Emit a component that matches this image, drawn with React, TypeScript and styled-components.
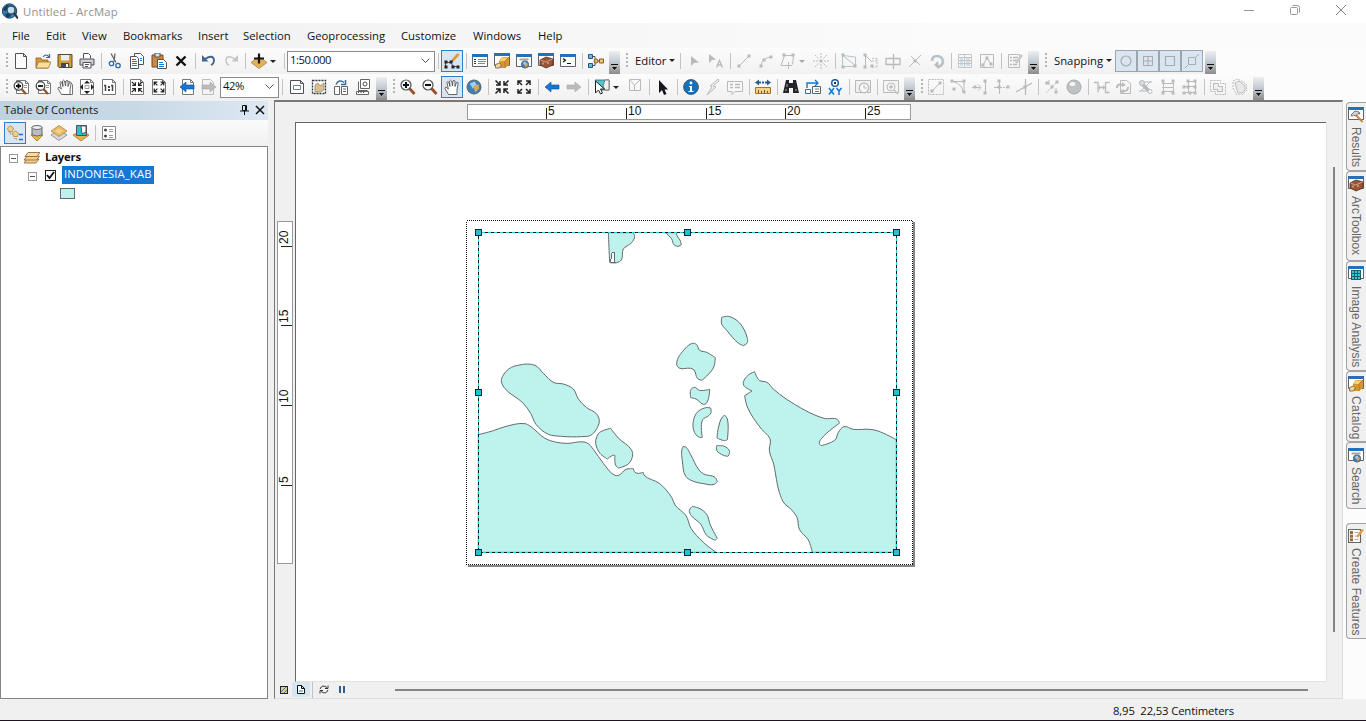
import React from "react";
import styled, { createGlobalStyle } from "styled-components";

const Global = createGlobalStyle`
  * { box-sizing: border-box; }
  body { margin: 0; overflow: hidden; background: #f0f0f0; }
`;

const K = "#50505a";
const G = "#b9bab9";
const B = "#1377d3";
const Y = "#e2b05a";
const BR = "#8a5a2b";

const Shell = styled.div`
  width: 1366px;
  height: 721px;
  display: flex;
  flex-direction: column;
  font-family: "Open Sans", "Noto Sans", sans-serif;
  font-size: 11.3px;
  color: #111;
  background: #f0f0f0;
  border-bottom: 1px solid #1d1420;
`;
const TitleBar = styled.header`
  height: 23px;
  flex: none;
  display: flex;
  align-items: center;
  padding: 0 19px 1px 2px;
  background: #fff;
  color: #929292;
`;
const Title = styled.span`
  flex: 1;
  margin-left: 5px;
  letter-spacing: 0.15px;
  padding-top: 1px;
`;
const WindowButton = styled.span`
  width: 12px;
  height: 16px;
  margin-left: 34px;
  display: flex;
  align-items: center;
  justify-content: center;
  padding-bottom: 2px;
`;
const MenuBar = styled.nav`
  height: 25px;
  flex: none;
  display: flex;
  align-items: center;
  gap: 16px;
  padding-left: 12px;
  background: linear-gradient(90deg, #f0f0f0, #fbfbfb 70%);
`;
const MenuItem = styled.span<{ $w: number }>`
  width: ${(p) => p.$w}px;
  white-space: nowrap;
`;
const ToolRow = styled.div`
  height: 26px;
  flex: none;
  display: flex;
  background: #fcfcfc;
`;
const Bar = styled.div`
  display: flex;
  align-items: center;
  height: 26px;
  background: linear-gradient(#fcfcfc, #f1f1f1);
`;
const Grip = styled.span<{ $w: number; $x: number }>`
  width: ${(p) => p.$w}px;
  height: 16px;
  background: radial-gradient(circle at 1px 1px, #b4b4b4 1px, transparent 1.3px) ${(p) => p.$x}px 0 / 2px 4px;
  background-repeat: repeat-y;
`;
const Sep = styled.span<{ $w?: number }>`
  width: ${(p) => p.$w ?? 6}px;
  height: 16px;
  display: flex;
  justify-content: center;
  &::before { content: ""; width: 1px; background: #c3c3c3; }
`;
const Tool = styled.span<{ $w?: number; $mode?: "on" | "snap" }>`
  width: ${(p) => p.$w ?? 22}px;
  height: 22px;
  display: flex;
  align-items: center;
  justify-content: ${(p) => (p.$w ? "flex-start" : "center")};
  padding-left: ${(p) => (p.$w ? 3 : 0)}px;
  gap: 3px;
  border: ${(p) => (p.$mode === "on" ? "1px solid #2a7fd0" : p.$mode === "snap" ? "1px solid #9da5ad" : "0")};
  background: ${(p) => (p.$mode ? "#d9e6f2" : "transparent")};
`;
const Caret = styled.i<{ $c?: string }>`
  border: 3px solid transparent;
  border-top-color: ${(p) => p.$c ?? "#222"};
  border-bottom: 0;
`;
const Overflow = styled.span`
  width: 11px;
  height: 23px;
  margin: 3px 0 0 2px;
  display: flex;
  align-items: flex-end;
  justify-content: center;
  padding-bottom: 3px;
  background: linear-gradient(#eee, #c4ced6 45%, #a3a3a3 80%, #8b8b8b);
`;
const BarLabel = styled.span<{ $w: number; $pl: number }>`
  width: ${(p) => p.$w}px;
  padding: 0 0 2px ${(p) => p.$pl}px;
  display: flex;
  align-items: center;
  gap: 3px;
  white-space: nowrap;
`;
const Combo = styled.span<{ $w: number }>`
  width: ${(p) => p.$w}px;
  height: 21px;
  display: flex;
  align-items: center;
  justify-content: space-between;
  padding: 0 4px 3px 2px;
  border: 1px solid #8b8b8b;
  background: #fff;
  letter-spacing: -0.45px;
  svg { margin-top: 3px; }
`;
const Work = styled.main`
  height: 599px;
  flex: none;
  display: flex;
`;
const Toc = styled.aside`
  width: 268px;
  display: flex;
  flex-direction: column;
  padding-top: 1px;
`;
const TocHead = styled.div`
  height: 19px;
  display: flex;
  align-items: center;
  padding: 0 3px 2px 4px;
  gap: 6px;
  color: #1a1a1a;
  background: linear-gradient(90deg, #bfd2e1, #c8d9e6 50%, #dde8f3);
`;
const TocTitle = styled.span`
  flex: 1;
  letter-spacing: -0.02px;
`;
const TocTools = styled.div`
  height: 26px;
  display: flex;
  align-items: center;
  padding-left: 4px;
  background: linear-gradient(#fbfbfb, #f0f0f0);
`;
const Tree = styled.div`
  flex: 1;
  border: 1px solid #858585;
  background: #fff;
  padding-top: 1px;
`;
const TreeRow = styled.div<{ $indent: number }>`
  height: 18px;
  padding-left: ${(p) => p.$indent}px;
  display: flex;
  align-items: center;
`;
const Expander = styled.i<{ $mr?: number }>`
  width: 9px;
  height: 9px;
  margin: 3px ${(p) => p.$mr ?? 0}px 0 0;
  border: 1px solid #999;
  display: flex;
  align-items: center;
  justify-content: center;
  &::before { content: ""; width: 5px; height: 1px; background: #555; }
`;
const Check = styled.i`
  width: 11px;
  height: 11px;
  margin: 1px 6px 0 8px;
  border: 1px solid #222;
  display: flex;
`;
const LayerGroup = styled.b`
  margin: -2px 0 0 5px;
  letter-spacing: -0.2px;
`;
const Selected = styled.span`
  height: 18px;
  width: 92px;
  padding-left: 2px;
  line-height: 16px;
  background: #1377d3;
  color: #fff;
  letter-spacing: 0.1px;
  white-space: nowrap;
`;
const Swatch = styled.i`
  width: 15px;
  height: 11px;
  border: 1px solid #686868;
  background: #bef2ec;
`;
const MapFrame = styled.section`
  width: 1069px;
  margin-left: 6px;
  display: flex;
  flex-direction: column;
  border: 1px solid #dfdfd8;
  border-top: 2px solid #777;
  border-left: 1px solid #777;
`;
const RulerRow = styled.div`
  height: 20px;
  padding: 2px 0 0 192px;
`;
const MapMiddle = styled.div`
  flex: 1;
  display: flex;
`;
const RulerColumn = styled.div`
  width: 20px;
  padding: 99px 0 0 2px;
`;
const HRuler = styled.div`
  width: 444px;
  height: 16px;
  border: 1px solid #9a9a9a;
  background: #fff;
  display: flex;
  padding-left: 78px;
`;
const HTick = styled.span<{ $w: number }>`
  width: ${(p) => p.$w}px;
  height: 14px;
  font: 12px/13px "Liberation Sans", Arial, sans-serif;
  padding-left: 2px;
  background: linear-gradient(#222, #222) 0 3px / 1px 11px no-repeat;
`;
const VRuler = styled.div`
  width: 16px;
  height: 343px;
  border: 1px solid #9a9a9a;
  background: #fff;
  display: flex;
  flex-direction: column;
  padding-top: 4px;
`;
const VTick = styled.span<{ $h: number }>`
  height: ${(p) => p.$h}px;
  width: 14px;
  flex: none;
  writing-mode: vertical-rl;
  transform: rotate(180deg);
  font: 12px/13px "Liberation Sans", Arial, sans-serif;
  padding-top: 3px;
  background: linear-gradient(#222, #222) 0 0 / 11px 1px no-repeat;
`;
const Canvas = styled.div`
  width: 1031px;
  background: #fff;
  border-top: 1px solid #666;
  border-left: 1px solid #666;
  border-bottom: 1px solid #e2e2dc;
  padding: 97px 0 0 170px;
  svg { display: block; }
`;
const VScroll = styled.div`
  flex: 1;
  border-left: 1px solid #e2e2dc;
  padding: 45px 0 0 6px;
  &::before { content: ""; display: block; width: 2px; height: 465px; background: #858585; }
`;
const BottomBar = styled.div`
  height: 16px;
  display: flex;
  align-items: center;
  padding-bottom: 1px;
`;
const ViewButton = styled.span<{ $w: number; $on?: boolean }>`
  width: ${(p) => p.$w}px;
  height: 15px;
  display: flex;
  align-items: center;
  justify-content: center;
  background: ${(p) => (p.$on ? "#d5e6f0" : "transparent")};
  border-radius: 2px;
`;
const HThumb = styled.span`
  width: 913px;
  height: 2px;
  margin: 1px 0 0 47px;
  background: #858585;
`;
const TabStrip = styled.aside`
  width: 23px;
  background: #fcfcfc;
  padding: 2px 0 0 3px;
  display: flex;
  flex-direction: column;
`;
const SideTab = styled.div<{ $h: number; $gap?: number; $ls: number }>`
  height: ${(p) => p.$h}px;
  margin-top: ${(p) => p.$gap ?? 0}px;
  flex: none;
  display: flex;
  flex-direction: column;
  align-items: flex-start;
  padding: 4px 0 0 1px;
  gap: 4px;
  border: 1px solid #a2a2a2;
  border-right: 0;
  border-radius: 4px 0 0 4px;
  background: #f0f0f0;
  color: #666;
  span {
    writing-mode: vertical-rl;
    white-space: nowrap;
    font: 12px/16px "Liberation Sans", Arial, sans-serif;
    letter-spacing: ${(p) => p.$ls}px;
  }
`;
const StatusBar = styled.footer`
  flex: 1;
  padding: 3px 0 0 1113px;
  white-space: pre;
  line-height: 17px;
  letter-spacing: -0.14px;
`;

type LineProps = { d: string; c?: string; w?: number; f?: string; dash?: string };
const L = ({ d, c = K, w = 1, f = "none", dash }: LineProps) => (
  <path d={d} stroke={c} strokeWidth={w} fill={f} strokeDasharray={dash} />
);
const Dots = ({ at, c = K }: { at: number[][]; c?: string }) => (
  <>{at.map(([x, y]) => <rect key={`${x}-${y}`} x={x - 1.5} y={y - 1.5} width="3" height="3" fill={c} />)}</>
);
const Page = ({ c = K }: { c?: string }) => <L d="M2.5 .5h8l3 3v12h-11zM10.5 .5v3h3" c={c} f="#fbfbfb" />;
const Win = ({ y = 1 }: { y?: number }) => (
  <>
    <L d={`M.5 ${y + 0.5}h15v12h-15z`} c="#5d626b" f="#fff" />
    <rect x="0" y={y} width="16" height="3" fill="#2770b8" />
  </>
);
const Globe = ({ x, y, r }: { x: number; y: number; r: number }) => (
  <>
    <circle cx={x} cy={y} r={r} fill="#3d80bd" stroke="#56636f" />
    <path d={`M${x - r * 0.6} ${y - r * 0.5}l${r * 0.7}-${r * 0.3}l${r * 0.3} ${r * 0.5}l-${r * 0.6} ${r * 0.5}z`} fill="#a9cde8" />
    <path d={`M${x - r * 0.1} ${y - r * 0.1}l${r * 0.8}-${r * 0.3}v${r * 0.6}l-${r * 0.5} ${r * 0.6}z`} fill="#dca75b" />
  </>
);
const Box3 = <><path d="M5 8l3-4h7v8l-4 3H5z" fill="#d8962f" /><path d="M8 4.500h6.500L11 8H5.500z" fill="#f4cf7c" /><L d="M11 8v7M11 8l4-4" c="#a9702a" w={0.8} /><path d="M1.500 11.500l4-1.500 2 2-2 3h-4z" fill="#ead49a" stroke="#805820" strokeWidth=".8" /></>;
const Toolbox = <><path d="M2 7l6-3 7 2v6l-7 3-6-3z" fill="#9a5434" stroke="#53301f" strokeWidth=".8" /><path d="M2.500 7l5 2 7-3" stroke="#d8a37d" fill="none" /><path d="M5 9.500v2M10 9v2" stroke="#efcdae" /></>;
const Quad = ({ out }: { out?: boolean }) => (
  <path
    stroke="#222"
    strokeWidth="1.500"
    d={
      out
        ? "M2 6V2h4M10 2h4v4M2 10v4h4M14 10v4h-4M2 2l4 4M14 2l-4 4M2 14l4-4M14 14l-4-4"
        : "M2 6h4V2M10 2v4h4M2 10h4v4M14 10h-4v4M6 6L1.500 1.500M10 6l4.500-4.500M6 10l-4.500 4.500M10 10l4.500 4.500"
    }
  />
);
const PageBack = () => <L d="M1.500 .5h10l3 3v12h-13zM11.500 .5v3h3" f="#fff" c="#777" />;
const Magnifier = ({ plus }: { plus?: boolean }) => (
  <>
    <path d="M9.500 9.500l5 5.500" stroke="#9a4f27" strokeWidth="2.800" />
    <circle cx="6" cy="6" r="5" fill="#f2f5f7" stroke="#555" strokeWidth="1.200" />
    <L d={plus ? "M3 6h6M6 3v6" : "M3 6h6"} c="#111" w={2} />
  </>
);
const PageMagnifier = ({ plus }: { plus?: boolean }) => (
  <>
    <L d="M3.500 1.500h9l3 3v10h-12zM12.500 1.500v3h3" f="#fff" c="#777" />
    <L d="M11 6.500h3M11 8.500h3" c="#999" />
    <path d="M8.500 10l4.500 5" stroke="#9a4f27" strokeWidth="2.200" />
    <circle cx="5.500" cy="7" r="4.300" fill="#f6f6f6" stroke="#444" strokeWidth="1.200" />
    <L d={plus ? "M3 7h5M5.500 4.500v5" : "M3 7h5"} c="#111" w={1.800} />
  </>
);
const HandShape = ({ page }: { page?: boolean }) => (
  <>
    {page && <L d="M5.500 2.500h7l3 3v10h-10z" f="#fff" c="#777" />}
    <path d="M4.500 15.500L1 9.500q0-2 2-.8l1.300 1.500L3 3.500q.3-1.600 1.700-.3L6 7.500 5.600 2q1-1.700 2 0L8.500 7 9 2q1-1.500 2 0v5.500l1.500-4q1.400-1 1.700.5L13 11v4.500z" fill="#fff" stroke="#444" strokeWidth=".8" />
  </>
);
const Arrow = ({ left, c, edge }: { left?: boolean; c: string; edge: string }) => (
  <path d={left ? "M1 8l6-5v3h8v4H7v3z" : "M15 8L9 3v3H1v4h8v3z"} fill={c} stroke={edge} strokeWidth=".6" />
);

const glyphs: Record<string, React.ReactNode> = {
  new: <Page />,
  open: <><path d="M1 5h5l1 2h6v8H1z" fill="#d89b3c" stroke={BR} strokeWidth=".8" /><path d="M3.500 9H16l-2.500 6H1z" fill="#f8dfa0" stroke="#a87529" strokeWidth=".8" /><L d="M8 4q3-4 6 0M14.500 1v3.500H11" c="#426287" w={1.2} /></>,
  save: <><path d="M1 1.500h14v13H2l-1-1z" fill="#d39a3c" stroke="#5a4a30" /><path d="M4 2h8v5.500H4z" fill="#e9eef2" /><path d="M4 10h8v4.500H4z" fill="#464850" /><path d="M9 11h2v3H9z" fill="#fff" /></>,
  print: <><L d="M4.500 5.500v-5h5l2 2v3" f="#fff" /><path d="M1 6h14v6H1z" fill="#ced0d2" stroke={K} /><path d="M4 9.500h8v5.500H4z" fill="#fff" stroke={K} /><L d="M6 11.500h4M6 13.500h3" /></>,
  cut: <><L d="M4 .5l5 9M8 .5l-1 8" w={1.300} c="#666" /><circle cx="4.500" cy="10.500" r="2.200" fill="none" stroke="#2b6aa4" strokeWidth="1.300" /><circle cx="11" cy="12.500" r="2.200" fill="none" stroke="#2b6aa4" strokeWidth="1.300" /></>,
  copy: <><L d="M5.500 .5h6l3 3v8h-9z" f="#fff" /><L d="M1.500 3.500h6l2 2v10h-8z" f="#fff" /><L d="M3 6.500h4M3 8.500h5M3 10.500h5M3 12.500h5M11 5.500h2M11 7.500h2" c={B} /></>,
  paste: <><path d="M1 2h11v12H1z" fill="#c98a45" stroke="#704922" /><path d="M4 0h5v4H4z" fill="#ddd" stroke={K} /><L d="M6.500 6.500h6l3 3v6h-9z" f="#fff" /><L d="M8 9.500h4M8 11.500h5M8 13.500h5" c={B} /></>,
  del: <L d="M3.500 3.500l9 9M12.500 3.500l-9 9" c="#111" w={2.4} />,
  undo: <><L d="M4 6q8-5 9 1 0 4-3 5" c="#44658c" w={1.800} /><path d="M1 2v6.500h6.500z" fill="#44658c" /></>,
  redo: <><L d="M12 6Q4 1 3 7q0 4 3 5" c="#c5c5c5" w={1.4} /><path d="M15 2v6.500H8.500z" fill="#c5c5c5" /></>,
  add: <><path d="M0 9.500l8-6 8 6-8 6z" fill={Y} stroke="#b98633" strokeWidth=".8" /><L d="M8 .5v10M3 5.500h10" c="#161616" w={2.2} /></>,
  edit: <><L d="M1.500 13.500v-4h5l3 4h5" w={1} /><Dots at={[[2, 9], [2, 14], [7, 9], [9, 14], [14, 14]]} c="#222" /><L d="M8.500 7.500L14.500 1" c="#e0993f" w={2.600} /><L d="M7 9.500l1.500-2" c="#333" w={1.5} /></>,
  toc: <><Win /><L d="M2 6.500h2M2 8.500h2M2 10.500h2" c="#333" /><L d="M6 6.500h8M6 8.500h8M6 10.500h7" c="#4b95d3" /></>,
  catalog: <><Win y={0} />{Box3}</>,
  search: <><Win /><L d="M3.500 6.500h9" c="#a5a5a5" w={2} /><Globe x={9} y={11.500} r={3.600} /></>,
  toolbox: <><Win y={0} />{Toolbox}</>,
  python: <><Win /><L d="M3 5.500l2.500 1.800L3 9M7 10.500h4" c="#111" w={1.2} /></>,
  model: <><L d="M4 3.500h3v9H4M7 8h4" /><path d="M.5 1.500h4v4h-4zM.5 10.500h4v4h-4z" fill="#62bfe2" stroke="#29577a" /><circle cx="8" cy="8" r="2" fill="#eab85e" stroke={BR} /><path d="M11.500 6h4v4h-4z" fill="#efc472" stroke={BR} /></>,
  editArrow: <path d="M5 3v10l3-3 5-.5z" fill={G} />,
  editA: <><path d="M1 1v9l3-3 4-.5z" fill={G} /><L d="M8.500 14.500l3-7 3 7M9.500 12h4" c={G} w={1.4} /></>,
  line: <><L d="M3 13L13 3" c={G} /><Dots at={[[3, 13], [13, 3]]} c={G} /></>,
  arc: <><L d="M3 13q1-8 10-9" c={G} /><Dots at={[[3, 13], [6, 7], [13, 4]]} c={G} /></>,
  poly: <><L d="M1 12.500L4.500 2.500h9l-1 9M5 12.500H1M8.500 9v7M5 12.500h7" c={G} /><Dots at={[[4, 2], [13, 2]]} c={G} /></>,
  burst: <><Dots at={[[8, 8]]} c={G} /><L d="M8 0v5M8 11v5M0 8h5M11 8h5M2 2l3.500 3.500M14 2l-3.500 3.500M2 14l3.500-3.500M14 14l-3.500-3.500" c={G} dash="2 1" /></>,
  reshape: <><L d="M1.500 2.500l13 10V4L2 2.500M1.500 2.500v11h13" c="#b5c6cf" /><Dots at={[[2, 2], [2, 14], [14, 13]]} c={G} /></>,
  cutPoly: <><L d="M2.500 1v13M2 2l7 7" c={G} /><L d="M9 5.500h5M9 8h5M9 14h5M14 6v8" c="#b5c6cf" dash="2 1" /><Dots at={[[2, 2], [2, 14], [9, 13]]} c={G} /></>,
  split: <L d="M1 5.500h14v6H1zM8.500 1v15" c={G} w={1.300} />,
  cross: <><L d="M2 14L14 2M4 3l9 9" c={G} /><Dots at={[[8, 8]]} c={G} /></>,
  rotate: <><L d="M3 8q0-5 5-5t6 5q0 5-6 6" c="#b7c3cb" w={2.600} /><path d="M9 8l-4 4 5 4z" fill={G} /></>,
  table: <><L d="M1.500 1.500h13v13h-13zM1 4.500h14M1 7.500h14M1 10.500h14M7.500 1v14" c="#c3c6c6" /><L d="M3 6h3M3 9h3M3 12h3M9 6h4M9 9h4M9 12h4" c="#a9c9dd" /></>,
  sketch: <><L d="M1.500 1.500h13v13h-13zM4 12l4-7 4 6" c={G} /><Dots at={[[4, 12], [8, 5], [12, 11]]} c={G} /></>,
  create: <><L d="M1.500 1.500h11v13h-11z" c={G} /><L d="M3 4.500h2M3 7.500h2M3 11.500h2M6 4.500h5M6 7.500h4M6 11.500h4" c={G} w={1.400} /><L d="M9 10l6-8" c="#c9c9c9" w={2.500} /></>,
  snap1: <circle cx="8" cy="8" r="5" fill="none" stroke="#aaa" strokeWidth="1.200" />,
  snap2: <L d="M3.500 3.500h9v9h-9zM8 3v10M3 8h10" c="#aaa" />,
  snap3: <L d="M3.500 3.500h9v9h-9z" c="#aaa" w={1.200} />,
  snap4: <L d="M4.500 4.500h7v7h-7zM1 15L4 12M12 4l3-3" c="#aaa" />,
  pzin: <PageMagnifier plus />,
  pzout: <PageMagnifier />,
  phand: <HandShape page />,
  pfull: <><PageBack /><path d="M8 1.500L5 4.500h6zM8 15l-3-3h6zM1 8l3-3v6zM15 8l-3-3v6z" fill="#222" /><L d="M6 6.500h4v3H6z" c="#999" /></>,
  ratio: <><PageBack /><L d="M4.500 6v6M11.500 6v6M3 6.500h2M10 6.500h2" w={1.500} c="#444" /><path d="M7 7h2v2H7zM7 10h2v2H7z" fill="#444" /></>,
  pin: <><PageBack /><g transform="translate(1.600 1.600) scale(.8)"><Quad /></g></>,
  pout: <><PageBack /><g transform="translate(1.600 1.600) scale(.8)"><Quad out /></g></>,
  pback: <><L d="M3.500 .5h8l3 3v12h-11zM11.500 .5v3h3" f="#fff" c="#777" /><Arrow left c={B} edge="#0c4f93" /></>,
  pfwd: <><L d="M1.500 .5h8l3 3v12h-11z" c={G} f="#f4f4f4" /><Arrow c="#bbb" edge="#aaa" /></>,
  draft: <><L d="M1.500 1.500h10l3 3v10h-13zM11.500 1.500v3h3" f="#fff" /><path d="M4.500 6.500h7v4h-7z" fill="#fff" stroke="#708090" /></>,
  focus: <><L d="M1.500 1.500h13v13h-13z" w={1.300} dash="2 1" f="#fff" c="#333" /><path d="M4 6l3-2 2 3 4-3v7l-4 2H4z" fill="#dfbf85" stroke="#7d8a92" strokeWidth=".8" /></>,
  layout: <><L d="M1.500 7.500h5v8h-5zM8.500 7.500h6v8h-6zM10 10h3M10 12.500h3" f="#fff" c="#666" /><L d="M3 5.500q3-6 8-2M12.500 1v4.500H8" c="#3a6fa0" w={1.500} /></>,
  ddp: <><L d="M5.500 .5h9v9h-9zM3.500 2.500v9h9M1.500 12.500h12v3h-12z" f="#fff" c="#666" /><circle cx="10" cy="5" r="2" fill="#fff" stroke={K} /><L d="M3.500 12v2M6 12v2M8.500 12v2" /></>,
  zin: <Magnifier plus />,
  zout: <Magnifier />,
  hand: <HandShape />,
  globe: <Globe x={8} y={8} r={7} />,
  fixedin: <Quad />,
  fixedout: <Quad out />,
  back: <Arrow left c={B} edge="#0c4f93" />,
  fwd: <Arrow c="#bbb" edge="#aaa" />,
  select: <><path d="M1 1h14v10H6z" fill="#4bc6d2" stroke="#555" strokeWidth=".8" /><path d="M11 1h4v10h-4l-2-4z" fill="#eee" stroke="#666" strokeWidth=".8" /><path d="M1.500 2v12l3-3 2 4 2-1-2-4h4z" fill="#fff" stroke="#222" /></>,
  clear: <L d="M2.500 .5h11v11h-11zM3 1l4.500 5L13 1M7.500 6v5" c={G} />,
  pointer: <path d="M4 1v13l3-3 2 5 2.500-1-2-4.500H13z" fill="#16161c" />,
  info: <><circle cx="8" cy="8" r="7.400" fill="#1670bd" stroke="#41576b" /><circle cx="8" cy="4" r="1.400" fill="#fff" /><path d="M6 7h3v5h1.500v1h-5v-1H7V8H6z" fill="#fff" /></>,
  flash: <path d="M13 0L5 7l2 1-5 8 9-8-3-1 6-5z" fill="#eee" stroke={G} />,
  popup: <><L d="M.5 2.500h15v10H8l-3 3v-3H.5z" c={G} f="#f8f8f8" /><L d="M3 5.500h3M3 8.500h3M8 5.500h5M8 8.500h5" c={G} w={1.500} /></>,
  measure: <><path d="M0 3.500l4-3v2h2v2H4v2zM16 3.500l-4-3v2h-2v2h2v2zM7 2.500h2v2H7z" fill="#2a5c8f" /><path d="M.5 8.500h15v6H.5z" fill="#f4d284" stroke="#b06c24" /><L d="M3.500 11v3M6.500 12v2M9.500 11v3M12.500 12v2" c="#8e541b" /></>,
  find: <><path d="M3 1h3v3h4V1h3l3 13h-6V9H6v5H0z" fill="#24252a" /><path d="M2 11h2M12 11h2M4 5v3" stroke="#aaa" /></>,
  route: <><L d="M2 9V4h10M10 1l3 3-3 3" c={B} w={1.400} /><path d="M.5 10.500h5v4h-5zM7.500 7.500h8v7h-8z" fill="#fff" stroke="#49677f" /><L d="M10 10h4M10 12.500h4" c="#777" /></>,
  xy: <><circle cx="8" cy="4" r="3.300" fill="#fff" stroke="#1d5e9b" strokeWidth="1.500" /><path d="M7 3h2v2H7z" fill="#234" /><L d="M2 9l5 6.500M7 9l-5 6.500M9.500 9l2.500 3 2.500-3M12 12v4" c={B} w={1.500} /></>,
  time: <><L d="M.5 1.500h15v12H.5z" c={G} f="#f1f1f1" /><circle cx="9" cy="9" r="4.800" fill="#f7f7f7" stroke={G} strokeWidth="1.300" /><L d="M9 6v3h3" c={G} /></>,
  viewer: <><L d="M.5 1.500h15v12H.5z" c={G} f="#f5f5f5" /><circle cx="8" cy="8" r="4" fill="#f7f7f7" stroke={G} /><L d="M6 8h4M8 6v4M11 11l4 4" c={G} w={1.300} /></>,
  a1: <><L d="M.5 .5h15v15H.5z" c={G} dash="2 1" /><L d="M4 12l8-8" c={G} /><Dots at={[[4, 12], [12, 4]]} c={G} /></>,
  a2: <><L d="M1 2.500h13v11M4 3q8 2 9 10" c={G} /><Dots at={[[2, 2], [14, 2], [14, 13], [4, 10]]} c={G} /></>,
  a3: <><L d="M0 8.500h8M6 5.500l3 3-3 3M13.500 1v14" c={G} /><Dots at={[[3, 8], [13, 2], [13, 14]]} c={G} /></>,
  a4: <><L d="M5.500 1v14M0 8.500h5" c={G} /><L d="M6 8.500h8" c={G} dash="2 1" /><Dots at={[[5, 2], [5, 8], [14, 8]]} c={G} /></>,
  a5: <><L d="M0 13L16 4M9.500 0v16" c={G} w={1.300} /><Dots at={[[9, 8]]} c={G} /></>,
  b1: <><L d="M2 14L14 2M5 1v5M1 4h6M12 9v6" c={G} dash="2 1" /><Dots at={[[3, 4], [8, 8], [13, 3], [12, 13]]} c={G} /></>,
  b2: <><circle cx="8" cy="8" r="7" fill="#bfc2c3" stroke="#a9a9a9" /><ellipse cx="6.500" cy="5" rx="3" ry="2" fill="#f4f4f4" /></>,
  c1: <><L d="M0 3.500h4v10M11.500 3v10.500h4M15.500 3.500h-4M6 8.500h5" c={G} w={1.300} /><path d="M6 6v5L4 8.500zM9 6l2 2.500L9 11z" fill={G} /></>,
  c2: <><L d="M4.500 1.500h6l4 3v10h-10z" c={G} /><L d="M1 9q0-5 6-3M12 8q0 5-6 4" c={G} w={2} /><path d="M6 3l4 3-4 2zM7 15l-3-3 4-2z" fill={G} /></>,
  c3: <><L d="M1 3h13M1 12h13M2 2l11 11M13 2L3 12" c="#b4bbbe" /><L d="M4 5l8 8" c="#b4bbbe" w={3.500} /><circle cx="4" cy="4" r="2.500" fill="#d8dde0" stroke={G} /><circle cx="12" cy="12.500" r="2" fill="#fff" stroke={G} /></>,
  c4: <><L d="M3.500 2.500v11M13.500 2.500v11M2 4.500h12M2 8.500h12M2 12.500h12" c={G} /><Dots at={[[3, 2], [13, 2], [3, 14], [13, 14]]} c={G} /></>,
  c5: <><L d="M6.500 2v11M13.500 2v11M1 7.500h13M1 13.500h13M7 2.500h7" c={G} /><Dots at={[[6, 2], [13, 2], [2, 8], [6, 8], [13, 8], [2, 14], [8, 14], [13, 14]]} c={G} /></>,
  d1: <><L d="M.5 1.500h10v3h5v11h-10v-3h-5z" c={G} dash="2 1" /><L d="M3.500 4.500h5v3h4v5h-5v-2h-4z" c={G} f="#eee" /></>,
  d2: <><L d="M1 2l5-2 8 5 1 6-5 5H5L1 9z" c={G} dash="2 1" /><path d="M3 4l4-2 6 5v4l-3 3H6z" fill="#e9e9e9" stroke={G} /></>,
  listDraw: <><L d="M3 5v4h3M8 9v5h3" c="#777" dash="1 1" /><path d="M3.500 .8l3 2.200-1 3.500h-4L.5 3zM8.500 6l3 2-1 3.500h-4l-1-3.500z" fill="#efd18f" stroke="#b5883e" strokeWidth=".8" /><L d="M12 9.500h4M12 14.500h4" c={B} w={1.5} /></>,
  listSource: <><path d="M2 10l6-2 6 2-6 6z" fill="#e7b75d" stroke="#b98633" /><path d="M3 2v8q5 2 10 0V2z" fill="#b9bdc1" stroke="#64686d" /><ellipse cx="8" cy="2.500" rx="5" ry="2" fill="#eee" stroke="#64686d" /></>,
  stack: <><path d="M0 10l8-5 8 5-8 5.500z" fill="#d5d7da" stroke="#85878b" strokeWidth=".8" /><path d="M0 6l8-5.500L16 6l-8 5.500z" fill="#e9bc69" stroke="#b7832e" strokeWidth=".8" /><path d="M4 6l4-2.500L12 6 8 8.500z" fill="#f2cf8c" /></>,
  listSel: <><path d="M0 10l8-4 8 4-8 6z" fill={Y} stroke="#b98633" /><L d="M3.500 .5h10v10h-10z" f="#27c2ca" /><path d="M8 1h5v6L9 9z" fill="#fff" stroke="#555" /></>,
  options: <><L d="M1.500 1.500h13v13h-13z" c="#888" f="#fff" /><circle cx="4.500" cy="5" r="1.500" fill="#444" /><circle cx="4.500" cy="11" r="1.500" fill="#444" /><L d="M8 4.500h4M8 6.500h4M8 10.500h4M8 12.500h4" c="#999" /></>,
  layers: <><path d="M0 14l3-4h12l-3 4z" fill="#f3d18a" stroke={BR} strokeWidth=".8" /><path d="M0 11l3-4h12.500l-3 4z" fill="#f3d18a" stroke={BR} strokeWidth=".8" /><path d="M1 7.500l3-4h12l-3 4z" fill="#f7dda3" stroke={BR} strokeWidth=".8" /></>,
  results: <><Win y={0} /><L d="M7 7l7.500 8" c="#c58a42" w={2} /><path d="M3 8l4-4 4 1 1 2-2-.5L7.500 9l-2-1L4 9.500z" fill="#d5d5d5" stroke="#555" strokeWidth=".8" /></>,
  image: <><Win y={0} /><path d="M3 4h10v10H3z" fill="#35c7d2" /><L d="M3.500 4v10M6.500 4v10M9.500 4v10M12.500 4v10M3 4.500h10M3 7.500h10M3 10.500h10M3 13.500h10" c="#20606d" /></>,
  createTab: <><L d="M.5 1.500h12v13H.5z" c="#666" w={1.2} f="#fff" /><Dots at={[[3.5, 4.5], [3.5, 8.2], [3.5, 11.8]]} c="#9a6a3b" /><L d="M6.500 4.500h4M6.500 8h2M6.500 11.500h4" c="#aaa" /><L d="M9 9l6-7.500" c="#e0a045" w={2.3} /></>,
  logo: <><circle cx="7.500" cy="8" r="7.200" fill="#2d82bd" stroke="#1b4970" /><path d="M1 6l4-4 3 1-2 4-4 1zM3 11l4-1 2 3-4 2z" fill="#173b5c" /><circle cx="9" cy="7" r="4" fill="#b9dff0" stroke="#3b4650" strokeWidth="1.300" /><L d="M12 10l4 5.500" c="#3a3038" w={2.2} /></>,
};

const Icon = ({ n, s = 16 }: { n: string; s?: number }) => (
  <svg width={s} height={s} viewBox="0 0 16 16" fill="none">{glyphs[n]}</svg>
);
const Tools = ({ names }: { names: string }) => (
  <>
    {names.split(" ").map((n, i) => (n === "|" ? <Sep key={i} /> : <Tool key={i}><Icon n={n} /></Tool>))}
  </>
);
const Chevron = () => (
  <svg width="9" height="6" fill="none"><path d="M.5 .5l4 4 4-4" stroke="#555" /></svg>
);
const More = () => (
  <Overflow>
    <svg width="7" height="7"><path d="M0 .5h7" stroke="#111" /><path d="M0 2.500h7L3.500 6.500z" fill="#111" stroke="#fff" strokeWidth=".5" /></svg>
  </Overflow>
);

const menus: [string, number][] = [
  ["File", 18], ["Edit", 20], ["View", 25], ["Bookmarks", 59], ["Insert", 29],
  ["Selection", 48], ["Geoprocessing", 78], ["Customize", 56], ["Windows", 49], ["Help", 25],
];

// Outline vertices of the land polygons, in thirds of a pixel.
const leftShapes = [
  "55 674 100 662 135 650 195 641 210 648 255 685 290 697 320 700 380 698 400 718 430 760 465 796 476 796 498 778 520 776 525 787 535 790 550 787 552 795 598 820 635 862 645 885 678 917 693 955 730 997 768 1027 55 1027",
  "165 468 225 466 250 490 282 518 310 522 340 537 355 567 380 593 409 611 418 632 409 658 392 676 365 680 305 679 265 673 228 643 212 610 190 580 135 536 124 514 130 495 145 478",
  "418 668 452 655 475 684 514 719 518 735 505 762 475 774 467 766 465 736 459 736 442 747 420 730 407 700 409 684",
  "445 68 449 158 470 158 484 150 490 117 515 98 524 80 520 68",
  "616 68 635 87 642 104 654 109 664 104 660 90 651 77 650 68",
];
const rightShapes = [
  "185 322 205 319 238 338 262 385 262 398 250 407 236 400 200 361 185 342",
  "77 414 98 400 109 403 119 421 140 427 166 443 160 474 126 511 113 506 102 480 92 475 57 474 50 462",
  "93 538 104 532 118 541 149 538 138 581 130 583 108 567 92 563",
  "109 610 137 593 152 594 153 608 146 617 128 629 127 682 118 682 101 661",
  "175 654 188 620 195 616 202 627 202 689 194 692 171 684",
  "170 707 190 708 203 715 209 727 204 739 190 736 170 721",
  "69 710 77 711 92 734 117 780 131 792 165 802 172 815 163 823 130 821 93 811 77 799 67 752 65 723",
  "88 901 97 889 120 896 140 913 151 945 172 985 166 991 140 976 122 942 94 917",
  "250 517 265 495 284 485 298 511 321 517 340 537 380 568 492 625 533 629 538 640 485 685 478 700 483 707 526 689 535 667 552 650 580 658 630 658 654 663 709 689 709 1027 457 1027 445 990 418 958 411 922 388 893 374 882 358 847 347 795 341 762 328 722 331 690 324 677 305 658 262 591 254 557 276 543 251 526",
];

// Closed curve through the vertices; sharp turns stay as corners.
function outline(list: string): string {
  const n = list.split(" ").map(Number);
  const pts: [number, number][] = [];
  for (let i = 0; i < n.length; i += 2) pts.push([n[i], n[i + 1]]);
  const at = (i: number) => pts[(i + pts.length) % pts.length];
  const tangent = (i: number): [number, number] => {
    const [a, b, c] = [at(i - 1), at(i), at(i + 1)];
    const u = [b[0] - a[0], b[1] - a[1]];
    const v = [c[0] - b[0], c[1] - b[1]];
    const lu = Math.hypot(u[0], u[1]);
    const lv = Math.hypot(v[0], v[1]);
    if ((u[0] * v[0] + u[1] * v[1]) / (lu * lv) < 0.45) return [0, 0];
    const t = [u[0] / lu + v[0] / lv, u[1] / lu + v[1] / lv];
    const lt = Math.hypot(t[0], t[1]);
    return [t[0] / lt, t[1] / lt];
  };
  let d = `M${pts[0].join(" ")}`;
  pts.forEach((p, i) => {
    const q = at(i + 1);
    const k = Math.hypot(q[0] - p[0], q[1] - p[1]) / 3;
    const s = tangent(i);
    const e = tangent(i + 1);
    d += `C${p[0] + s[0] * k} ${p[1] + s[1] * k} ${q[0] - e[0] * k} ${q[1] - e[1] * k} ${q[0]} ${q[1]}`;
  });
  return `${d}z`;
}
const handles = [[55, 67], [682, 67], [1309, 67], [55, 547], [1309, 547], [55, 1027], [682, 1027], [1309, 1027]];

const LayoutPage = () => (
  <svg width="449" height="347" viewBox="466 220 449 347" shapeRendering="crispEdges">
    <rect x="468" y="222" width="447" height="345" fill="#858585" />
    <rect x="466.500" y="220.500" width="446" height="344" fill="#fff" stroke="#111" strokeDasharray="1 1" />
    <g fill="#bef2ec" stroke="#626a6d">
      <g transform="translate(460 210) scale(.33333)">
        {leftShapes.map((s) => <path key={s} d={outline(s)} strokeWidth="3" strokeLinejoin="round" />)}
        <path d="M452 157L455 130 462 126 463 152 467 157z" fill="#fff" strokeWidth="3" />
      </g>
      <g transform="translate(660 210) scale(.33333)">
        {rightShapes.map((s) => <path key={s} d={outline(s)} strokeWidth="3" strokeLinejoin="round" />)}
      </g>
    </g>
    <rect x="478.500" y="232.500" width="418" height="320" fill="none" stroke="#1fd0df" />
    <rect x="478.500" y="232.500" width="418" height="320" fill="none" stroke="#151515" strokeDasharray="3 3" />
    {handles.map(([x, y]) => (
      <rect key={`${x},${y}`} x={Math.floor(460 + x / 3) - 2.5} y={Math.floor(210 + y / 3) - 2.5} width="6" height="6" fill="#1fc3d4" stroke="#0c2838" />
    ))}
  </svg>
);

export default function App() {
  return (
    <Shell>
      <Global />
      <TitleBar>
        <Icon n="logo" />
        <Title>Untitled - ArcMap</Title>
        <WindowButton><svg width="10" height="10"><path d="M0 5.500h10" stroke="#999" /></svg></WindowButton>
        <WindowButton><svg width="10" height="10" fill="none" stroke="#999"><rect x=".5" y="2.500" width="7" height="7" rx="1" /><path d="M2.500 .5h5q2 0 2 2v5" /></svg></WindowButton>
        <WindowButton><svg width="10" height="10"><path d="M0 0l10 10M10 0L0 10" stroke="#888" /></svg></WindowButton>
      </TitleBar>
      <MenuBar>{menus.map(([t, w]) => <MenuItem key={t} $w={w}>{t}</MenuItem>)}</MenuBar>
      <ToolRow>
        <Bar>
          <Grip $w={10} $x={6} />
          <Tools names="new open save print | cut copy paste del | undo redo |" />
          <Tool $w={33}><Icon n="add" /><Caret /></Tool>
          <Sep />
          <Combo $w={148}>1:50.000<Chevron /></Combo>
          <Sep />
          <Tool $mode="on"><Icon n="edit" /></Tool>
          <Sep />
          <Tools names="toc catalog search toolbox python | model" />
          <More />
        </Bar>
        <Bar>
          <Grip $w={12} $x={6} />
          <BarLabel $w={45} $pl={3}>Editor<Caret /></BarLabel>
          <Tools names="| editArrow editA | line arc" />
          <Tool $w={33}><Icon n="poly" /><Caret $c="#aaa" /></Tool>
          <Tools names="burst | reshape cutPoly split cross rotate | table sketch | create" />
          <More />
        </Bar>
        <Bar>
          <Grip $w={12} $x={6} />
          <BarLabel $w={64} $pl={3}>Snapping<Caret /></BarLabel>
          {["snap1", "snap2", "snap3", "snap4"].map((n) => <Tool key={n} $mode="snap"><Icon n={n} /></Tool>)}
          <More />
        </Bar>
      </ToolRow>
      <ToolRow>
        <Bar>
          <Grip $w={10} $x={6} />
          <Tools names="pzin pzout phand pfull ratio | pin pout | pback pfwd" />
          <Combo $w={59}>42%<Chevron /></Combo>
          <Sep $w={7} />
          <Tools names="draft focus layout ddp" />
          <More />
        </Bar>
        <Bar>
          <Grip $w={10} $x={6} />
          <Tools names="zin zout" />
          <Tool $mode="on"><Icon n="hand" /></Tool>
          <Tools names="globe | fixedin fixedout | back fwd |" />
          <Tool $w={33}><Icon n="select" /><Caret /></Tool>
          <Tools names="clear | pointer | info flash popup | measure | find route xy | time | viewer" />
          <More />
        </Bar>
        <Bar>
          <Grip $w={10} $x={6} />
          <Tools names="a1 a2 a3 a4 a5 | b1 b2 | c1 c2 c3 c4 c5 | d1 d2" />
          <More />
        </Bar>
      </ToolRow>
      <Work>
        <Toc>
          <TocHead>
            <TocTitle>Table Of Contents</TocTitle>
            <svg width="9" height="10" fill="none" stroke="#111"><path d="M2.500 .5h4v5h-4zM5.500 1v5M0 6h9M4.500 6v4" /></svg>
            <svg width="10" height="10"><path d="M1 1l8 8M9 1L1 9" stroke="#111" strokeWidth="1.500" /></svg>
          </TocHead>
          <TocTools>
            <Tool $mode="on"><Icon n="listDraw" /></Tool>
            <Tools names="listSource stack listSel | options" />
          </TocTools>
          <Tree>
            <TreeRow $indent={8}><Expander $mr={6} /><Icon n="layers" /><LayerGroup>Layers</LayerGroup></TreeRow>
            <TreeRow $indent={27}>
              <Expander />
              <Check><svg width="9" height="9"><path d="M1 4l2.500 3L8 1" stroke="#111" strokeWidth="1.800" fill="none" /></svg></Check>
              <Selected>INDONESIA_KAB</Selected>
            </TreeRow>
            <TreeRow $indent={59}><Swatch /></TreeRow>
          </Tree>
        </Toc>
        <MapFrame>
          <RulerRow>
            <HRuler>
              {[5, 10, 15, 20, 25].map((n, i) => <HTick key={n} $w={i === 4 ? 40 : i === 2 ? 79 : 80}>{n}</HTick>)}
            </HRuler>
          </RulerRow>
          <MapMiddle>
            <RulerColumn>
              <VRuler>
                {[20, 15, 10, 5].map((n, i) => <VTick key={n} $h={i === 0 ? 21 : i === 1 ? 79 : 80}>{n}</VTick>)}
              </VRuler>
            </RulerColumn>
            <Canvas><LayoutPage /></Canvas>
            <VScroll />
          </MapMiddle>
          <BottomBar>
            <ViewButton $w={17}><svg width="8" height="8"><rect x=".5" y=".5" width="7" height="7" fill="#eac889" stroke="#222" /><path d="M1 6l5-5M4 7l3-3" stroke="#57738e" /></svg></ViewButton>
            <ViewButton $w={18} $on><svg width="8" height="9"><path d="M.5 .5h4l3 3v5h-7zM4.500 .5v3h3" fill="#fff" stroke="#111" /><path d="M2 6h4" stroke="#2188b5" /></svg></ViewButton>
            <Sep $w={4} />
            <ViewButton $w={20}><svg width="10" height="9" fill="none" stroke="#333"><path d="M1 4Q3-1 8 2.500M9 .5v3H6M9 5Q7 10 2 6.500M1 8.500v-3h3" /></svg></ViewButton>
            <ViewButton $w={14}><svg width="7" height="7"><path d="M1 0h2v7H1zM5 0h2v7H5z" fill="#315f91" /></svg></ViewButton>
            <HThumb />
          </BottomBar>
        </MapFrame>
        <TabStrip>
          <SideTab $h={69} $ls={0}><Icon n="results" /><span>Results</span></SideTab>
          <SideTab $h={90} $ls={-0.03}><Icon n="toolbox" /><span>ArcToolbox</span></SideTab>
          <SideTab $h={110} $ls={0.05}><Icon n="image" /><span>Image Analysis</span></SideTab>
          <SideTab $h={71} $ls={0.35}><Icon n="catalog" /><span>Catalog</span></SideTab>
          <SideTab $h={67} $ls={-0.1}><Icon n="search" /><span>Search</span></SideTab>
          <SideTab $h={116} $gap={14} $ls={0.05}><Icon n="createTab" /><span>Create Features</span></SideTab>
        </TabStrip>
      </Work>
      <StatusBar>8,95  22,53 Centimeters</StatusBar>
    </Shell>
  );
}
